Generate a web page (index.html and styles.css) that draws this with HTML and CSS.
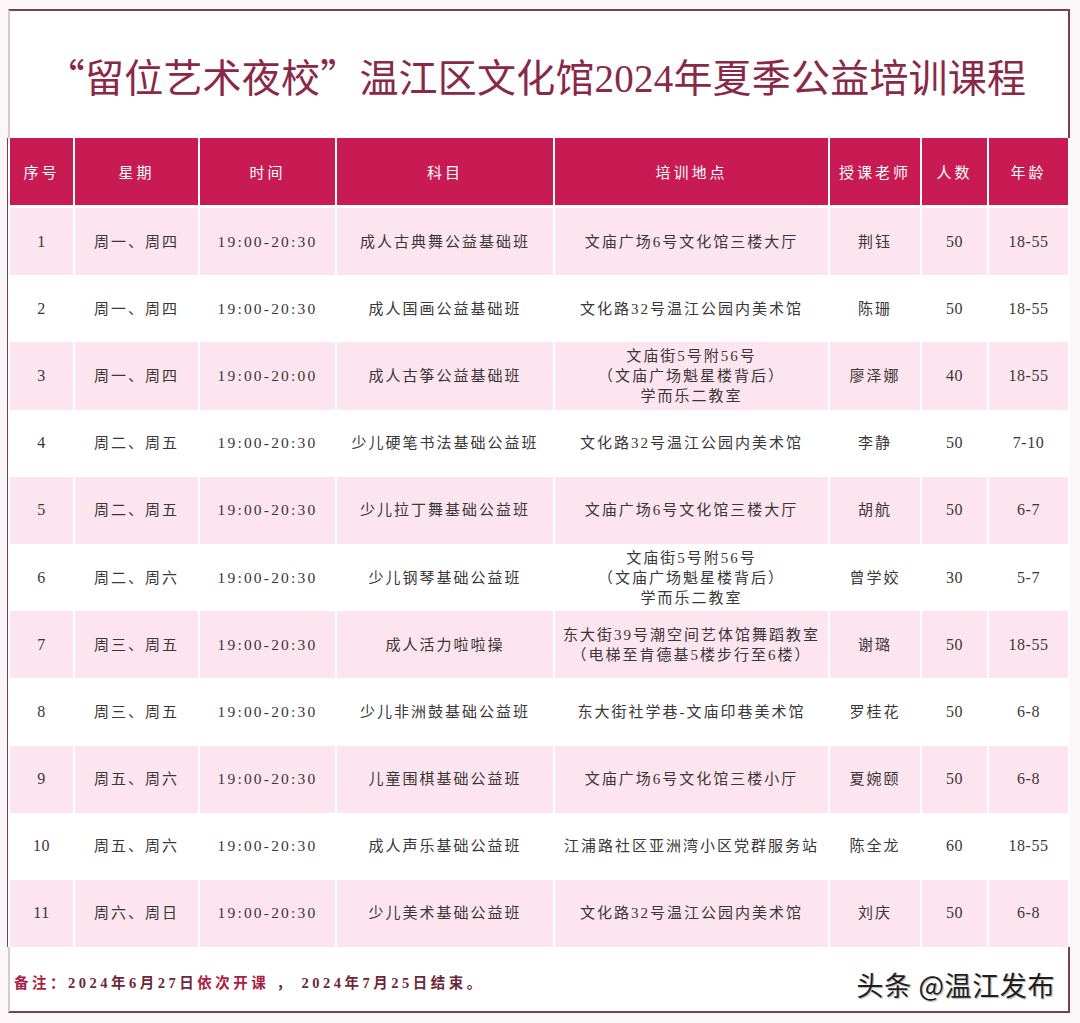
FILE: index.html
```html
<!DOCTYPE html>
<html lang="zh-CN">
<head>
<meta charset="utf-8">
<title>“留位艺术夜校”温江区文化馆2024年夏季公益培训课程</title>
<link rel="stylesheet" href="styles.css">
</head>
<body>
<div class="sheet">
  <h1 class="title"><span class="q">“</span>留位艺术夜校<span class="q">”</span>温江区文化馆2024年夏季公益培训课程</h1>
  <table class="schedule">
    <colgroup>
      <col class="c-no"><col class="c-day"><col class="c-time"><col class="c-subj"><col class="c-place"><col class="c-teacher"><col class="c-num"><col class="c-age">
    </colgroup>
    <thead>
      <tr><th>序号</th><th>星期</th><th>时间</th><th>科目</th><th>培训地点</th><th>授课老师</th><th>人数</th><th>年龄</th></tr>
    </thead>
    <tbody>
      <tr><td class="num">1</td><td>周一、周四</td><td class="time">19:00-20:30</td><td>成人古典舞公益基础班</td><td>文庙广场6号文化馆三楼大厅</td><td>荆钰</td><td class="num">50</td><td class="num">18-55</td></tr>
      <tr><td class="num">2</td><td>周一、周四</td><td class="time">19:00-20:30</td><td>成人国画公益基础班</td><td>文化路32号温江公园内美术馆</td><td>陈珊</td><td class="num">50</td><td class="num">18-55</td></tr>
      <tr><td class="num">3</td><td>周一、周四</td><td class="time">19:00-20:00</td><td>成人古筝公益基础班</td><td>文庙街5号附56号<br>（文庙广场魁星楼背后）<br>学而乐二教室</td><td>廖泽娜</td><td class="num">40</td><td class="num">18-55</td></tr>
      <tr><td class="num">4</td><td>周二、周五</td><td class="time">19:00-20:30</td><td>少儿硬笔书法基础公益班</td><td>文化路32号温江公园内美术馆</td><td>李静</td><td class="num">50</td><td class="num">7-10</td></tr>
      <tr><td class="num">5</td><td>周二、周五</td><td class="time">19:00-20:30</td><td>少儿拉丁舞基础公益班</td><td>文庙广场6号文化馆三楼大厅</td><td>胡航</td><td class="num">50</td><td class="num">6-7</td></tr>
      <tr><td class="num">6</td><td>周二、周六</td><td class="time">19:00-20:30</td><td>少儿钢琴基础公益班</td><td>文庙街5号附56号<br>（文庙广场魁星楼背后）<br>学而乐二教室</td><td>曾学姣</td><td class="num">30</td><td class="num">5-7</td></tr>
      <tr><td class="num">7</td><td>周三、周五</td><td class="time">19:00-20:30</td><td>成人活力啦啦操</td><td>东大街39号潮空间艺体馆舞蹈教室<br>（电梯至肯德基5楼步行至6楼）</td><td>谢璐</td><td class="num">50</td><td class="num">18-55</td></tr>
      <tr><td class="num">8</td><td>周三、周五</td><td class="time">19:00-20:30</td><td>少儿非洲鼓基础公益班</td><td>东大街社学巷-文庙印巷美术馆</td><td>罗桂花</td><td class="num">50</td><td class="num">6-8</td></tr>
      <tr><td class="num">9</td><td>周五、周六</td><td class="time">19:00-20:30</td><td>儿童围棋基础公益班</td><td>文庙广场6号文化馆三楼小厅</td><td>夏婉颐</td><td class="num">50</td><td class="num">6-8</td></tr>
      <tr><td class="num">10</td><td>周五、周六</td><td class="time">19:00-20:30</td><td>成人声乐基础公益班</td><td>江浦路社区亚洲湾小区党群服务站</td><td>陈全龙</td><td class="num">60</td><td class="num">18-55</td></tr>
      <tr><td class="num">11</td><td>周六、周日</td><td class="time">19:00-20:30</td><td>少儿美术基础公益班</td><td>文化路32号温江公园内美术馆</td><td>刘庆</td><td class="num">50</td><td class="num">6-8</td></tr>
    </tbody>
  </table>
  <div class="foot">
    <p class="note"><span class="hl">备注：</span>2024年6月27日<span class="hl">依次开课</span> ， 2024年7月25日结束。</p>
    <span class="mark">头条 @温江发布</span>
  </div>
</div>
</body>
</html>
```
FILE: styles.css
```css
html, body {
  margin: 0;
  padding: 0;
  background: #fbf6f8;
}

body {
  width: 1080px;
  height: 1023px;
  overflow: hidden;
  font-family: "Liberation Serif", "Noto Sans CJK SC", serif;
}

.sheet {
  box-sizing: border-box;
  margin: 9px 0 0 8px;
  width: 1062px;
  height: 1004px;
  background: #fff;
  border: 2px solid #7a3d56;
  border-left-color: #d9c9d0;
  display: flex;
  flex-direction: column;
}

.title {
  margin: 0;
  height: 127px;
  display: flex;
  align-items: center;
  justify-content: center;
  padding-right: 6px;
  font-size: 39px;
  font-weight: 400;
  letter-spacing: 0.2px;
  color: #8a2848;
  white-space: nowrap;
}

.title .q {
  font-family: "Noto Sans CJK SC", sans-serif;
}

.schedule {
  table-layout: fixed;
  border-collapse: separate;
  border-spacing: 2px 0;
  margin: 0 -2px;
  width: 1062px;
  background: #fff;
  box-shadow: -1px 0 0 #7a3d56;
}

.c-no { width: 63px; }
.c-day { width: 123px; }
.c-time { width: 135px; }
.c-subj { width: 216px; }
.c-place { width: 273px; }
.c-teacher { width: 90px; }
.c-num { width: 65px; }
.c-age { width: 79px; }

.schedule th {
  height: 67px;
  padding: 0;
  background: #c81b53;
  color: #fff;
  font-size: 15px;
  font-weight: 400;
  letter-spacing: 3px;
  text-align: center;
  border-bottom: 3px solid #fff;
}

.schedule td {
  height: 67.2px;
  padding: 0;
  font-size: 15px;
  line-height: 20px;
  letter-spacing: 2px;
  color: #3c3638;
  text-align: center;
  vertical-align: middle;
  white-space: nowrap;
}

.schedule tbody tr:nth-child(odd) td {
  background: #fce5ee;
}

.schedule td.num {
  font-size: 16px;
  letter-spacing: 0.5px;
}

.schedule td.time {
  font-size: 15.5px;
  letter-spacing: 2.2px;
}

.foot {
  flex: 1;
  display: flex;
  align-items: center;
  justify-content: space-between;
  padding: 4px 13px 0 4px;
}

.note {
  margin: 0;
  font-size: 14.5px;
  font-weight: 700;
  letter-spacing: 3.5px;
  color: #6c2839;
}

.note .hl {
  color: #a8213f;
}

.mark {
  margin-top: 6px;
  font-family: "Noto Sans CJK SC", "Noto Sans", sans-serif;
  font-size: 27px;
  color: #1e1e1e;
  letter-spacing: 0.6px;
  text-shadow: 0 0 2px #fff, 1px 1px 1px #9a9a9a;
}
```
